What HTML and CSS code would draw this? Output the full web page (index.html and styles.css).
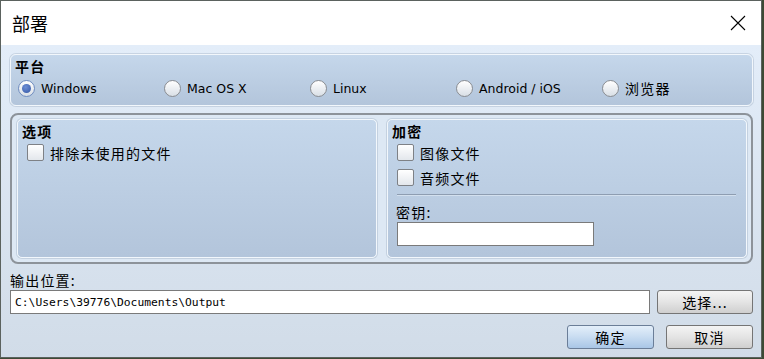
FILE: index.html
```html
<!DOCTYPE html>
<html lang="zh-CN">
<head>
    <meta charset="UTF-8">
    <title>部署</title>
    <link rel="stylesheet" href="styles.css">
</head>
<body>
    <div class="window">
        <header class="titlebar">
            <span class="title">部署</span>
            <span class="close">
                <svg width="16" height="16" viewBox="0 0 16 16">
                    <path d="M1 1 L15 15 M15 1 L1 15" stroke="#000" stroke-width="1.1" fill="none"/>
                </svg>
            </span>
        </header>

        <div class="content">
            <fieldset class="group platform">
                <div class="group-title">平台</div>
                <div class="radio-row">
                    <label class="radio"><input type="radio" name="platform" checked><span>Windows</span></label>
                    <label class="radio"><input type="radio" name="platform"><span>Mac OS X</span></label>
                    <label class="radio"><input type="radio" name="platform"><span>Linux</span></label>
                    <label class="radio"><input type="radio" name="platform"><span>Android / iOS</span></label>
                    <label class="radio"><input type="radio" name="platform"><span class="zh">浏览器</span></label>
                </div>
            </fieldset>

            <div class="frame">
                <div class="group panel">
                    <div class="group-title">选项</div>
                    <label class="check"><input type="checkbox"><span class="zh">排除未使用的文件</span></label>
                </div>
                <div class="group panel">
                    <div class="group-title">加密</div>
                    <label class="check"><input type="checkbox"><span class="zh">图像文件</span></label>
                    <label class="check"><input type="checkbox"><span class="zh">音频文件</span></label>
                    <div class="separator"></div>
                    <div class="field-label">密钥:</div>
                    <input class="key-input" type="text">
                </div>
            </div>

            <div class="field-label output-label">输出位置:</div>
            <div class="output-row">
                <input class="path-input" type="text" value="C:\Users\39776\Documents\Output">
                <button class="btn choose">选择...</button>
            </div>

            <div class="actions">
                <button class="btn primary">确定</button>
                <button class="btn">取消</button>
            </div>
        </div>
    </div>
</body>
</html>
```

FILE: styles.css
```css
body {
    margin: 0;
    background-color: #3d4a35;
    font-family: "DejaVu Sans", "Noto Sans CJK SC", sans-serif;
    font-size: 12.5px;
    color: #000;
}

.window {
    width: 760px;
    height: 356px;
    border: 1px solid #5b625e;
    display: flex;
    flex-direction: column;
    background-color: #fff;
}

.titlebar {
    height: 44px;
    display: flex;
    align-items: center;
    justify-content: space-between;
    padding: 0 15px 0 11px;
    background-color: #fff;
}

.title {
    font-family: "Noto Sans CJK SC", sans-serif;
    font-size: 18px;
    line-height: 20px;
}

.close svg {
    display: block;
}

.content {
    flex: 1;
    display: flex;
    flex-direction: column;
    padding: 9px 8px 0 9px;
    background: linear-gradient(#e3edf9, #d1dce8);
}

.zh, .group-title, .field-label, .btn {
    font-family: "Noto Sans CJK SC", sans-serif;
    font-size: 14px;
    letter-spacing: 1.2px;
}

/* 分组面板 */
.group {
    margin: 0;
    border: 1px solid #f2f7fc;
    border-radius: 6px;
    background: linear-gradient(#c5d7eb, #b3c5db);
    box-shadow: 0 0 0 1px rgba(150, 165, 185, 0.35);
}

.group-title {
    font-weight: bold;
    line-height: 18px;
}

.platform {
    height: 52px;
    box-sizing: border-box;
    padding: 2px 4px 4px 4px;
}

.radio-row {
    display: grid;
    grid-template-columns: repeat(5, 146px);
    height: 24px;
    margin-top: 1px;
    padding-left: 3px;
}

.radio, .check {
    display: flex;
    align-items: center;
    gap: 6px;
}

.radio input {
    appearance: none;
    margin: 0;
    width: 17px;
    height: 17px;
    border-radius: 50%;
    border: 1px solid #8a8d92;
    background: linear-gradient(#ffffff, #d9dfe6);
    box-sizing: border-box;
    position: relative;
}

.radio input:checked {
    border-color: #6f8cc0;
}

.radio input:checked::after {
    content: "";
    position: absolute;
    left: 3px;
    top: 3px;
    width: 9px;
    height: 9px;
    border-radius: 50%;
    background: radial-gradient(circle at 40% 35%, #6d8fd6, #3355a3);
}

/* 选项框 */
.frame {
    margin-top: 7px;
    height: 151px;
    box-sizing: border-box;
    border: 2px solid #8d939a;
    border-radius: 8px;
    background-color: #dde8f4;
    padding: 4px 4px 4px 5px;
    display: flex;
    gap: 10px;
}

.panel {
    flex: 1;
    padding: 2px 5px 0 4px;
    border-radius: 5px;
}

.check {
    height: 25px;
    padding-left: 5px;
}

.check input {
    appearance: none;
    margin: 0;
    width: 17px;
    height: 17px;
    border: 1px solid #7e8186;
    border-radius: 2px;
    background: linear-gradient(#ffffff, #e3e7ec);
    box-sizing: border-box;
}

.separator {
    margin: 4px 5px 0 5px;
    height: 1px;
    background-color: #8e9db1;
    border-bottom: 1px solid #d3e0ee;
}

.field-label {
    line-height: 18px;
    margin-top: 7px;
    padding-left: 4px;
}

.key-input {
    display: block;
    margin: 1px 0 0 5px;
    width: 197px;
    height: 24px;
    box-sizing: border-box;
    border: 1px solid #7a7a7a;
    background-color: #fff;
}

/* 输出位置 */
.output-label {
    padding-left: 0;
}

.output-row {
    display: flex;
    gap: 7px;
    margin-top: 1px;
}

.path-input {
    width: 640px;
    height: 24px;
    box-sizing: border-box;
    border: 1px solid #7a7a7a;
    padding: 0 4px;
    font-family: "DejaVu Sans Mono", monospace;
    font-size: 11.3px;
    color: #000;
    background-color: #fff;
}

.btn {
    height: 24px;
    border: 1px solid #757575;
    border-radius: 3px;
    background: linear-gradient(#f4f4f4, #e4e4e4 50%, #cfcfcf);
    line-height: 20px;
    padding: 0;
    color: #000;
}

.choose {
    width: 96px;
}

.actions {
    display: flex;
    justify-content: flex-end;
    gap: 12px;
    margin-top: 11px;
}

.actions .btn {
    width: 87px;
}

.btn.primary {
    border-color: #6b7e98;
    background: linear-gradient(#e4effa, #c8dcf1 50%, #a9c6e6);
}
```
